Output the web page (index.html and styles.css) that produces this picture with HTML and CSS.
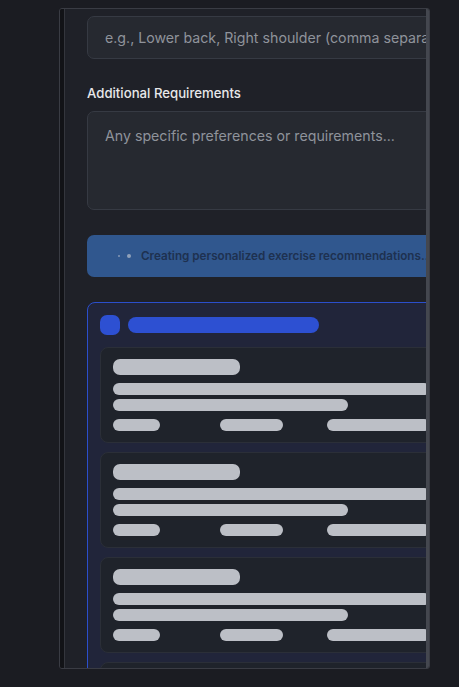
FILE: index.html
```html
<!DOCTYPE html>
<html lang="en">
<head>
<meta charset="utf-8">
<title>Exercise Recommendations</title>
<link rel="stylesheet" href="styles.css">
</head>
<body>
<div class="frame">
  <div class="strip"></div>
  <div class="viewport">
    <div class="content">
      <div class="field input">e.g., Lower back, Right shoulder (comma separated)</div>
      <label class="label">Additional Requirements</label>
      <div class="field textarea">Any specific preferences or requirements...</div>
      <div class="banner">
        <span class="dots"><span class="dot d1"></span><span class="dot d2"></span></span>
        <span class="banner-text">Creating personalized exercise recommendations...</span>
      </div>
      <div class="skeleton">
        <div class="sk-head">
          <span class="sk-icon"></span>
          <span class="sk-title"></span>
        </div>
        <div class="sk-list">
          <div class="sk-card">
            <span class="bar b-title"></span>
            <span class="bar b-line"></span>
            <span class="bar b-line short"></span>
            <div class="sk-meta"><span class="bar m1"></span><span class="bar m2"></span><span class="bar m3"></span></div>
          </div>
          <div class="sk-card">
            <span class="bar b-title"></span>
            <span class="bar b-line"></span>
            <span class="bar b-line short"></span>
            <div class="sk-meta"><span class="bar m1"></span><span class="bar m2"></span><span class="bar m3"></span></div>
          </div>
          <div class="sk-card">
            <span class="bar b-title"></span>
            <span class="bar b-line"></span>
            <span class="bar b-line short"></span>
            <div class="sk-meta"><span class="bar m1"></span><span class="bar m2"></span><span class="bar m3"></span></div>
          </div>
          <div class="sk-card">
            <span class="bar b-title"></span>
            <span class="bar b-line"></span>
            <span class="bar b-line short"></span>
            <div class="sk-meta"><span class="bar m1"></span><span class="bar m2"></span><span class="bar m3"></span></div>
          </div>
        </div>
      </div>
    </div>
  </div>
  <div class="scrollbar"></div>
</div>
</body>
</html>
```
FILE: styles.css
```css
* { box-sizing: border-box; }
html, body { margin: 0; padding: 0; }
body {
  background: #1b1c22;
  font-family: Inter, "Liberation Sans", sans-serif;
  width: 459px;
  height: 687px;
  overflow: hidden;
  padding: 8px 0 0 59px;
}
.frame {
  width: 371px;
  height: 661px;
  border: 1px solid #3a3c44;
  border-radius: 3px;
  display: flex;
  overflow: hidden;
  background: #1f2128;
}
.strip {
  width: 5px;
  flex: none;
  background: #121317;
  border-right: 1px solid #34363d;
}
.viewport {
  flex: 1;
  overflow: hidden;
  background: #1f2128;
}
.content {
  width: 391px;
  padding: 7px 0 0 22px;
  display: flex;
  flex-direction: column;
}
.scrollbar {
  width: 3px;
  flex: none;
  background: #44474f;
}
.field {
  background: #262930;
  border: 1px solid #363a43;
  border-radius: 7px;
  color: #8f939b;
  font-size: 14.2px;
  white-space: nowrap;
  overflow: hidden;
  padding: 0 17px;
}
.input {
  height: 43px;
  line-height: 41px;
}
.label {
  margin-top: 25px;
  color: #e8e8ea;
  font-size: 13.2px;
  font-weight: 500;
  line-height: 18px;
}
.textarea {
  margin-top: 9px;
  height: 99px;
  padding-top: 14px;
  line-height: 20px;
}
.banner {
  margin-top: 25px;
  height: 42px;
  border-radius: 7px;
  background: #30578e;
  display: flex;
  align-items: center;
  padding-left: 31px;
  white-space: nowrap;
}
.dots {
  display: flex;
  align-items: center;
  gap: 7px;
  width: 23px;
}
.dot {
  border-radius: 50%;
  background: #a9b4c6;
}
.d1 { width: 2px; height: 2px; opacity: 0.7; }
.d2 { width: 4px; height: 4px; opacity: 0.8; }
.banner-text {
  color: #1e3150;
  font-size: 11.7px;
  font-weight: 600;
}
.skeleton {
  margin-top: 25px;
  border: 1px solid #2b4fcc;
  border-radius: 8px;
  background: #21253a;
  padding: 12px 12px 0;
}
.sk-head {
  display: flex;
  align-items: center;
  gap: 8px;
  height: 20px;
  margin-bottom: 12px;
}
.sk-icon {
  width: 20px;
  height: 20px;
  border-radius: 7px;
  background: #2d50d2;
}
.sk-title {
  width: 191px;
  height: 16px;
  border-radius: 8px;
  background: #2d50d2;
}
.sk-list {
  display: flex;
  flex-direction: column;
  gap: 9px;
}
.sk-card {
  background: #1f232b;
  border: 1px solid #2b2f38;
  border-radius: 8px;
  padding: 11px 12px;
  height: 96px;
  display: flex;
  flex-direction: column;
}
.bar {
  display: block;
  background: #bcbfc6;
  border-radius: 7px;
}
.b-title { width: 127px; height: 16px; margin-bottom: 8px; }
.b-line { height: 12px; margin-bottom: 4px; }
.b-line.short { width: 235px; margin-bottom: 8px; }
.sk-meta {
  display: grid;
  grid-template-columns: 107px 107px 1fr;
}
.sk-meta .bar { height: 12px; }
.m1 { width: 47px; }
.m2 { width: 63px; }
.m3 { width: 100%; }
```
